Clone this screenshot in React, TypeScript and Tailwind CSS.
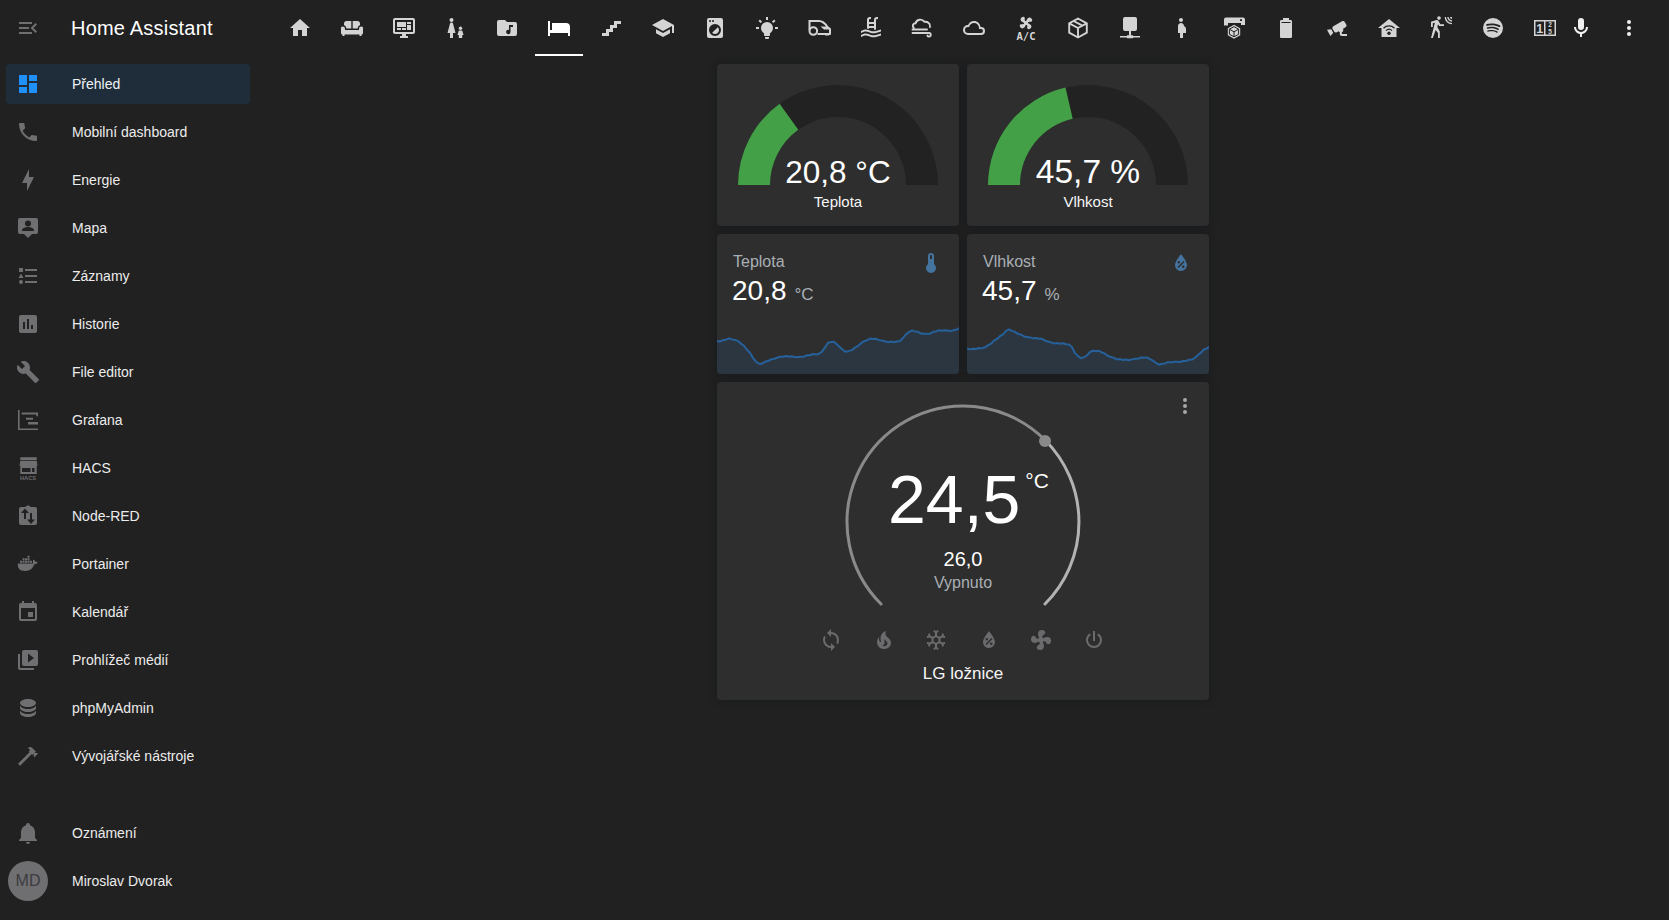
import React from "react";

const bg = "#212121";

function I({ d, className = "", children }: { d?: string; className?: string; children?: React.ReactNode }) {
  return (
    <svg viewBox="0 0 24 24" fill="currentColor" fillRule="evenodd" className={"w-6 h-6 shrink-0 block overflow-visible " + className}>
      {d ? <path d={d} /> : null}
      {children}
    </svg>
  );
}

const P = {
  menuOpen: "M21,15.61L19.59,17L14.58,12L19.59,7L21,8.39L17.44,12L21,15.61M3,6H16V8H3V6M3,13V11H13V13H3M3,18V16H16V18H3Z",
  dashboard: "M13,3V9H21V3M13,21H21V11H13M3,21H11V15H3M3,13H11V3H3V13Z",
  phone: "M6.62,10.79C8.06,13.62 10.38,15.94 13.21,17.38L15.41,15.18C15.69,14.9 16.08,14.82 16.43,14.93C17.55,15.3 18.75,15.5 20,15.5A1,1 0 0,1 21,16.5V20A1,1 0 0,1 20,21A17,17 0 0,1 3,4A1,1 0 0,1 4,3H7.5A1,1 0 0,1 8.5,4C8.5,5.25 8.7,6.45 9.07,7.57C9.18,7.92 9.1,8.31 8.82,8.59L6.62,10.79Z",
  bolt: "M11 15H6L13 1V9H18L11 23V15Z",
  map: "M4,2H20A2,2 0 0,1 22,4V16A2,2 0 0,1 20,18H16L12,22L8,18H4A2,2 0 0,1 2,16V4A2,2 0 0,1 4,2M12,4.5A3,3 0 0,0 9,7.5A3,3 0 0,0 12,10.5A3,3 0 0,0 15,7.5A3,3 0 0,0 12,4.5M6,15H18V14C18,12 14,10.9 12,10.9C10,10.9 6,12 6,14V15Z",
  list: "M5,9.5L7.5,14H2.5L5,9.5M3,4H7V8H3V4M5,20A2,2 0 0,0 7,18A2,2 0 0,0 5,16A2,2 0 0,0 3,18A2,2 0 0,0 5,20M9,5V7H21V5H9M9,19H21V17H9V19M9,13H21V11H9V13Z",
  chartBox: "M9 17H7V10H9V17M13 17H11V7H13V17M17 17H15V13H17V17M19 3H5C3.9 3 3 3.9 3 5V19C3 20.1 3.9 21 5 21H19C20.1 21 21 20.1 21 19V5C21 3.9 20.1 3 19 3Z",
  wrench: "M22.7,19L13.6,9.9C14.5,7.6 14,4.9 12.1,3C10.1,1 7.1,0.6 4.7,1.7L9,6L6,9L1.6,4.7C0.4,7.1 0.9,10.1 2.9,12.1C4.8,14 7.5,14.5 9.8,13.6L18.9,22.7C19.3,23.1 19.9,23.1 20.3,22.7L22.6,20.4C23.1,20 23.1,19.3 22.7,19Z",
  grafana: "M2,2H3.6V20.4H22V22H2V2M5.7,4.4H22V8.2H20.3V6.4H5.7V4.4M10,9.8H17V11.8H10V9.8M12,14H22V16.4H12V14Z",
  calendar: "M19,19H5V8H19M16,1V3H8V1H6V3H5C3.89,3 3,3.89 3,5V19A2,2 0 0,0 5,21H19A2,2 0 0,0 21,19V5C21,3.89 20.1,3 19,3H18V1M17,12H12V17H17V12Z",
  media: "M4,6H2V20A2,2 0 0,0 4,22H18V20H4V6M20,2H8A2,2 0 0,0 6,4V16A2,2 0 0,0 8,18H20A2,2 0 0,0 22,16V4A2,2 0 0,0 20,2M12,14.5V5.5L18,10L12,14.5Z",
  database: "M12,3C7.58,3 4,4.79 4,7C4,9.21 7.58,11 12,11C16.42,11 20,9.21 20,7C20,4.79 16.42,3 12,3M4,9V12C4,14.21 7.58,16 12,16C16.42,16 20,14.21 20,12V9C20,11.21 16.42,13 12,13C7.58,13 4,11.21 4,9M4,14V17C4,19.21 7.58,21 12,21C16.42,21 20,19.21 20,17V14C20,16.21 16.42,18 12,18C7.58,18 4,16.21 4,14Z",
  hammer: "M2 19.63L13.43 8.2L12.72 7.5L14.14 6.07L12 3.89C13.2 2.7 15.09 2.7 16.27 3.89L19.87 7.5L18.45 8.91H21.29L22 9.62L18.45 13.21L17.74 12.5V9.62L16.27 11.04L15.56 10.33L4.13 21.76L2 19.63Z",
  bell: "M21,19V20H3V19L5,17V11C5,7.9 7.03,5.17 10,4.29C10,4.19 10,4.1 10,4A2,2 0 0,1 12,2A2,2 0 0,1 14,4C14,4.1 14,4.19 14,4.29C16.97,5.17 19,7.9 19,11V17L21,19M14,21A2,2 0 0,1 12,23A2,2 0 0,1 10,21",
  docker: "M21.81 10.25C21.75 10.21 21.25 9.82 20.17 9.82C19.89 9.82 19.61 9.85 19.33 9.9C19.12 8.5 17.95 7.79 17.9 7.76L17.61 7.59L17.43 7.86C17.19 8.22 17 8.63 16.92 9.05C16.72 9.85 16.84 10.6 17.25 11.24C16.76 11.5 15.97 11.57 15.81 11.58H2.38C2.04 11.58 1.77 11.85 1.77 12.19C1.75 13.33 1.95 14.47 2.34 15.54C2.79 16.71 3.45 17.57 4.32 18.1C5.28 18.69 6.86 19 8.64 19C9.44 19 10.24 18.93 11.03 18.79C12.12 18.59 13.17 18.21 14.14 17.66C14.94 17.2 15.65 16.61 16.26 15.92C17.28 14.77 17.89 13.46 18.33 12.31H18.5C19.62 12.31 20.31 11.86 20.69 11.48C20.95 11.24 21.14 10.95 21.28 10.62L21.36 10.38L21.81 10.25ZM4 8.8H6V10.8H4ZM6.5 8.8H8.5V10.8H6.5ZM9 8.8H11V10.8H9ZM11.5 8.8H13.5V10.8H11.5ZM14 8.8H16V10.8H14ZM6.5 6.3H8.5V8.3H6.5ZM9 6.3H11V8.3H9ZM11.5 6.3H13.5V8.3H11.5ZM11.5 3.8H13.5V5.8H11.5Z",
  home: "M10,20V14H14V20H19V12H22L12,3L2,12H5V20H10Z",
  monitor: "M21,16V4H3V16H21M21,2A2,2 0 0,1 23,4V16A2,2 0 0,1 21,18H14V20H16V22H8V20H10V18H3C1.89,18 1,17.1 1,16V4C1,2.89 1.89,2 3,2H21M5,6H14V11H5V6M15,6H19V8H15V6M19,9V14H15V9H19M5,12H9V14H5V12M10,12H14V14H10V12Z",
  folderMusic: "M20 6H12L10 4H4A2 2 0 0 0 2 6V18A2 2 0 0 0 4 20H20A2 2 0 0 0 22 18V8A2 2 0 0 0 20 6M18 11H15.5V16A2.2 2.2 0 1 1 13.5 13.8C13.7 13.8 13.85 13.85 14 13.9V9H18Z",
  bed: "M19,7H5V14H3V5H1V20H3V17H21V20H23V11A4,4 0 0,0 19,7Z",
  stairs: "M15,5V9H11V13H7V17H3V20H10V16H14V12H18V8H22V5H15Z",
  school: "M12,3L1,9L12,15L21,10.09V17H23V9M5,13.18V17.18L12,21L19,17.18V13.18L12,17L5,13.18Z",
  washer: "M14.83,11.17C16.39,12.73 16.39,15.27 14.83,16.83C13.27,18.39 10.73,18.39 9.17,16.83L14.83,11.17M6,2H18A2,2 0 0,1 20,4V20A2,2 0 0,1 18,22H6A2,2 0 0,1 4,20V4A2,2 0 0,1 6,2M7,4A1,1 0 0,0 6,5A1,1 0 0,0 7,6A1,1 0 0,0 8,5A1,1 0 0,0 7,4M10,4A1,1 0 0,0 9,5A1,1 0 0,0 10,6A1,1 0 0,0 11,5A1,1 0 0,0 10,4M12,8A6,6 0 0,0 6,14A6,6 0 0,0 12,20A6,6 0 0,0 18,14A6,6 0 0,0 12,8Z",
  bulb: "M12,6A6,6 0 0,1 18,12C18,14.22 16.79,16.16 15,17.2V19A1,1 0 0,1 14,20H10A1,1 0 0,1 9,19V17.2C7.21,16.16 6,14.22 6,12A6,6 0 0,1 12,6M14,21V22A1,1 0 0,1 13,23H11A1,1 0 0,1 10,22V21H14M20,11H23V13H20V11M1,11H4V13H1V11M13,1V4H11V1H13M4.92,3.5L7.05,5.64L5.63,7.05L3.5,4.93L4.92,3.5M16.95,5.63L19.07,3.5L20.5,4.93L18.37,7.05L16.95,5.63Z",
  pool: "M2,15C3.67,14.25 5.33,13.5 7,13.58C8.67,13.67 10.33,14.58 12,15C13.67,15.42 15.33,15.33 17,15C18.67,14.67 20.33,14.08 22,13.5V15.5C20.33,16.08 18.67,16.67 17,17C15.33,17.33 13.67,17.42 12,17C10.33,16.58 8.67,15.67 7,15.58C5.33,15.5 3.67,16.25 2,17V15M2,19C3.67,18.25 5.33,17.5 7,17.58C8.67,17.67 10.33,18.58 12,19C13.67,19.42 15.33,19.33 17,19C18.67,18.67 20.33,18.08 22,17.5V19.5C20.33,20.08 18.67,20.67 17,21C15.33,21.33 13.67,21.42 12,21C10.33,20.58 8.67,19.67 7,19.58C5.33,19.5 3.67,20.25 2,21V19M8,12.5V4A3,3 0 0,1 11,1H12V3H11A1,1 0 0,0 10,4V6H15V4A3,3 0 0,1 18,1H19V3H18A1,1 0 0,0 17,4V13.5L15,13.8V12H10V13L8,12.5M10,8V10H15V8H10Z",
  cloud: "M6,19A5,5 0 0,1 1,14A5,5 0 0,1 6,9C7,6.65 9.3,5 12,5C15.43,5 18.24,7.66 18.5,11.03L19,11A4,4 0 0,1 23,15A4,4 0 0,1 19,19H6M19,13H17V12A5,5 0 0,0 12,7C9.5,7 7.45,8.82 7.06,11.19C6.73,11.07 6.37,11 6,11A3,3 0 0,0 3,14A3,3 0 0,0 6,17H19A2,2 0 0,0 21,15A2,2 0 0,0 19,13Z",
  fan: "M12.5,2C17,2 17.11,5.57 14.75,6.75C13.76,7.24 13.32,8.29 13.13,9.22C13.61,9.42 14.03,9.73 14.35,10.13C18.05,8.13 22.03,8.92 22.03,12.5C22.03,17 18.46,17.1 17.28,14.73C16.78,13.74 15.72,13.3 14.79,13.11C14.59,13.59 14.28,14 13.88,14.34C15.87,18.03 15.08,22 11.5,22C7,22 6.91,18.42 9.27,17.24C10.25,16.75 10.69,15.71 10.89,14.79C10.4,14.59 9.97,14.27 9.65,13.87C5.96,15.85 2,15.07 2,11.5C2,7 5.56,6.89 6.74,9.26C7.24,10.25 8.29,10.68 9.22,10.87C9.41,10.39 9.73,9.97 10.14,9.65C8.15,5.96 8.94,2 12.5,2Z",
  pregnant: "M9,4C9,2.89 9.89,2 11,2C12.11,2 13,2.89 13,4C13,5.11 12.11,6 11,6C9.89,6 9,5.11 9,4M16,13C16,11.66 15.17,10.5 14,10C14,8.34 12.66,7 11,7C9.34,7 8,8.34 8,10V17H10V22H13V17H16V13Z",
  battery: "M16.67,4H15V2H9V4H7.33A1.33,1.33 0 0,0 6,5.33V20.67C6,21.4 6.6,22 7.33,22H16.67A1.33,1.33 0 0,0 18,20.67V5.33C18,4.6 17.4,4 16.67,4ZM7.5,6H16.5V7H7.5Z",
  cctv: "M18.15,4.94C17.77,4.91 17.37,5 17,5.2L8.35,10.2C7.39,10.76 7.07,12 7.62,12.94L9.12,15.53C9.67,16.5 10.89,16.82 11.85,16.27L13.65,15.23C13.92,15.69 14.32,16.06 14.81,16.27V18.04C14.81,19.13 15.7,20 16.81,20H22V18.04H16.81V16.27C17.72,15.87 18.31,14.97 18.31,14C18.31,13.54 18.19,13.11 17.97,12.73L20.5,11.27C21.47,10.71 21.8,9.5 21.24,8.53L19.74,5.94C19.4,5.34 18.79,5 18.15,4.94M6.22,13.17L2,13.87L2.75,15.17L4.75,18.63L5.5,19.93L8.22,16.63L6.22,13.17Z",
  motion: "M10,0.2C9,0.2 8.2,1 8.2,2C8.2,3 9,3.8 10,3.8C11,3.8 11.8,3 11.8,2C11.8,1 11,0.2 10,0.2M15.67,1A7.33,7.33 0 0,0 23,8.33V7A6,6 0 0,1 17,1H15.67M18.33,1C18.33,3.58 20.42,5.67 23,5.67V4.33C21.16,4.33 19.67,2.84 19.67,1H18.33M21,1A2,2 0 0,0 23,3V1H21M7.92,4.03C7.75,4.03 7.58,4.06 7.42,4.11L2,5.8V11H3.8V7.33L5.91,6.67L2,22H3.8L6.67,13.89L9,17V22H10.8V15.59L8.31,11.05L9.04,8.18L10.12,10H15V8.2H11.38L9.38,4.87C9.08,4.37 8.54,4.03 7.92,4.03Z",
  spotify: "M17.9,10.9C14.7,9 9.35,8.8 6.3,9.75C5.8,9.9 5.3,9.6 5.15,9.15C5,8.65 5.3,8.15 5.75,8C9.3,6.95 15.15,7.15 18.85,9.35C19.3,9.6 19.45,10.2 19.2,10.65C18.95,11 18.35,11.15 17.9,10.9M17.8,13.7C17.55,14.05 17.1,14.2 16.75,13.95C14.05,12.3 9.95,11.8 6.8,12.8C6.4,12.9 5.95,12.7 5.85,12.3C5.75,11.9 5.95,11.45 6.35,11.35C10,10.25 14.5,10.8 17.6,12.7C17.9,12.85 18.05,13.35 17.8,13.7M16.6,16.45C16.4,16.75 16.05,16.85 15.75,16.65C13.4,15.2 10.45,14.9 6.95,15.7C6.6,15.8 6.3,15.55 6.2,15.25C6.1,14.9 6.35,14.6 6.65,14.5C10.45,13.65 13.75,14 16.35,15.6C16.7,15.75 16.75,16.15 16.6,16.45M12,2A10,10 0 0,0 2,12A10,10 0 0,0 12,22A10,10 0 0,0 22,12A10,10 0 0,0 12,2Z",
  mic: "M12,2A3,3 0 0,1 15,5V11A3,3 0 0,1 12,14A3,3 0 0,1 9,11V5A3,3 0 0,1 12,2M19,11C19,14.53 16.39,17.44 13,17.93V21H11V17.93C7.61,17.44 5,14.53 5,11H7A5,5 0 0,0 12,16A5,5 0 0,0 17,11H19Z",
  dots: "M12,16A2,2 0 0,1 14,18A2,2 0 0,1 12,20A2,2 0 0,1 10,18A2,2 0 0,1 12,16M12,10A2,2 0 0,1 14,12A2,2 0 0,1 12,14A2,2 0 0,1 10,12A2,2 0 0,1 12,10M12,4A2,2 0 0,1 14,6A2,2 0 0,1 12,8A2,2 0 0,1 10,6A2,2 0 0,1 12,4Z",
  thermo: "M15 13V5A3 3 0 0 0 9 5V13A5 5 0 1 0 15 13M12 4A1 1 0 0 1 13 5V8H11V5A1 1 0 0 1 12 4Z",
  waterPct: "M12,3.25C12,3.25 6,10 6,14C6,17.32 8.69,20 12,20A6,6 0 0,0 18,14C18,10 12,3.25 12,3.25M14.47,9.97L15.53,11.03L9.53,17.03L8.47,15.97M9.75,10A1.25,1.25 0 0,1 11,11.25A1.25,1.25 0 0,1 9.75,12.5A1.25,1.25 0 0,1 8.5,11.25A1.25,1.25 0 0,1 9.75,10M14.25,14.5A1.25,1.25 0 0,1 15.5,15.75A1.25,1.25 0 0,1 14.25,17A1.25,1.25 0 0,1 13,15.75A1.25,1.25 0 0,1 14.25,14.5Z",
  sync: "M12,18A6,6 0 0,1 6,12C6,11 6.25,10.03 6.7,9.2L5.24,7.74C4.46,8.97 4,10.43 4,12A8,8 0 0,0 12,20V23L16,19L12,15M12,4V1L8,5L12,9V6A6,6 0 0,1 18,12C18,13 17.75,13.97 17.3,14.8L18.76,16.26C19.54,15.03 20,13.57 20,12A8,8 0 0,0 12,4Z",
  fire: "M17.66 11.2C17.43 10.9 17.15 10.64 16.89 10.38C16.22 9.78 15.46 9.35 14.82 8.72C13.33 7.26 13 4.85 13.95 3C13 3.23 12.17 3.75 11.46 4.32C8.87 6.4 7.85 10.07 9.07 13.22C9.11 13.32 9.15 13.42 9.15 13.55C9.15 13.77 9 13.97 8.8 14.05C8.57 14.15 8.33 14.09 8.14 13.93C8.08 13.88 8.04 13.83 8 13.76C6.87 12.33 6.69 10.28 7.45 8.64C5.78 10 4.87 12.3 5 14.47C5.06 14.97 5.12 15.47 5.29 15.97C5.43 16.57 5.7 17.17 6 17.7C7.08 19.43 8.95 20.67 10.96 20.92C13.1 21.19 15.39 20.8 17.03 19.32C18.86 17.66 19.5 15 18.56 12.72L18.43 12.46C18.22 12 17.66 11.2 17.66 11.2M14.5 17.5C14.22 17.74 13.76 18 13.4 18.1C12.28 18.5 11.16 17.94 10.5 17.28C11.69 17 12.4 16.12 12.61 15.23C12.78 14.43 12.46 13.77 12.33 13C12.21 12.26 12.23 11.63 12.5 10.94C12.69 11.32 12.89 11.7 13.13 12C13.9 13 15.11 13.44 15.37 14.8C15.41 14.94 15.43 15.08 15.43 15.23C15.46 16.05 15.1 16.95 14.5 17.5H14.5Z",
  snow: "M20.79,13.95L18.46,14.57L16.46,13.44V10.56L18.46,9.43L20.79,10.05L21.31,8.12L19.54,7.65L20,5.88L18.07,5.36L17.45,7.69L15.45,8.82L13,7.38V5.12L14.71,3.41L13.29,2L12,3.29L10.71,2L9.29,3.41L11,5.12V7.38L8.5,8.82L6.5,7.69L5.92,5.36L4,5.88L4.47,7.65L2.7,8.12L3.22,10.05L5.55,9.43L7.55,10.56V13.45L5.55,14.58L3.22,13.96L2.7,15.89L4.47,16.36L4,18.12L5.93,18.64L6.55,16.31L8.55,15.18L11,16.62V18.88L9.29,20.59L10.71,22L12,20.71L13.29,22L14.7,20.59L13,18.88V16.62L15.5,15.17L17.5,16.3L18.12,18.63L20,18.12L19.53,16.35L21.3,15.88L20.79,13.95M9.5,10.56L12,9.11L14.5,10.56V13.44L12,14.89L9.5,13.44V10.56Z",
  power: "M16.56,5.44L15.11,6.89C16.84,7.94 18,9.83 18,12A6,6 0 0,1 12,18A6,6 0 0,1 6,12C6,9.83 7.16,7.94 8.88,6.88L7.44,5.44C5.36,6.88 4,9.28 4,12A8,8 0 0,0 12,20A8,8 0 0,0 20,12C20,9.28 18.64,6.88 16.56,5.44M13,3H11V13H13",
};

const HacsIcon = () => (
  <I>
    <path d="M4.3,1.3H20.7V4H4.3ZM4.3,4.7H20.7L21.5,9.7H3.5Z M4.3,9.7H20.7V18H4.3ZM6,12V16H14.5V12ZM16,12V16H18.5V12Z" />
    <text x="12" y="23.5" textAnchor="middle" fontSize="6" fontWeight="700" fontFamily="Liberation Sans" fill="currentColor" textLength="16" lengthAdjust="spacingAndGlyphs">HACS</text>
  </I>
);

const NodeRedIcon = () => (
  <I>
    <path d="M5,3H9.5C9.8,2 10.8,1.4 12,1.4C13.2,1.4 14.2,2 14.5,3H19A2,2 0 0,1 21,5V19A2,2 0 0,1 19,21H5A2,2 0 0,1 3,19V5A2,2 0 0,1 5,3Z M9,4.5L5,9H8V15H10V9H13Z M14,9V15.5H11L15,20L19,15.5H16V9Z" />
  </I>
);

const SofaIcon = () => (
  <I>
    <path d="M6.5,5H11.3V12.5H6.2V12C6.2,10.5 5,9.5 4,9.2V7.5C4,6 5.1,5 6.5,5ZM12.7,5H17.5C18.9,5 20,6 20,7.5V9.2C19,9.5 17.8,10.5 17.8,12V12.5H12.7Z" />
    <path d="M2.5,10.5C3.8,10.5 5,11.3 5,12.8V14H19V12.8C19,11.3 20.2,10.5 21.5,10.5C22.6,10.5 23.5,11.5 23,12.8V17C23,18 22,18.5 21.5,18.5V20H19.5V18.5H4.5V20H2.5V18.5C2,18.5 1,18 1,17V12.8C0.5,11.5 1.4,10.5 2.5,10.5Z" />
  </I>
);

const FamilyIcon = () => (
  <I>
    <circle cx="7.5" cy="4" r="2" />
    <path d="M7.5,6.5C8.3,6.5 8.8,7 9,7.6L11.5,17H9V22H6V17H3.5L6,7.6C6.2,7 6.7,6.5 7.5,6.5Z" />
    <circle cx="16.5" cy="12.3" r="1.7" />
    <path d="M14.8,14.6H18.2L19.6,19H18.2V22H14.8V19H13.4Z" />
  </I>
);

const MowerIcon = () => (
  <I>
    <path fill="none" stroke="currentColor" strokeWidth="2" strokeLinejoin="round" d="M1.5,5H12C15.5,5 18.5,8 20.5,11L23,13V18H10.5 M2.5,14V5" />
    <circle cx="6.3" cy="15" r="3.8" fill="none" stroke="currentColor" strokeWidth="2" />
    <path d="M13.5,10.5H19.5L23,13.5H17Z M18,18.5H22V19.5H18Z" />
  </I>
);

const WindCloudIcon = () => (
  <I>
    <path fill="none" stroke="currentColor" strokeWidth="1.9" strokeLinecap="round" d="M3.8,11.8C1.8,10 3,7.2 5.6,7.2C6.6,3.2 12,2.4 14.4,5.8C17.5,5.4 20.8,7.5 20,11 M2.5,13.5H17 M2.5,17H19C21.3,17 21.3,20.6 19,20.6C18.2,20.6 17.6,20.2 17.4,19.6" />
  </I>
);

const AcIcon = () => (
  <I>
    <g transform="translate(3.6,-1.4) scale(0.7) rotate(45 12 12)">
      <path d={P.fan} />
    </g>
    <text x="12" y="23.8" textAnchor="middle" fontSize="11" fontWeight="700" fontFamily="DejaVu Sans Mono" fill="currentColor" textLength="19" lengthAdjust="spacingAndGlyphs">A/C</text>
  </I>
);

const BoxIcon = () => (
  <I>
    <path fill="none" stroke="currentColor" strokeWidth="1.9" strokeLinejoin="round" d="M12,2.5L20.8,7.3V16.7L12,21.5L3.2,16.7V7.3Z M3.2,7.3L12,12L20.8,7.3 M12,12V21.5 M7.6,5L16.4,9.7" />
  </I>
);

const ServerIcon = () => (
  <I>
    <path d="M7,1H17A2,2 0 0,1 19,3V13A2,2 0 0,1 17,15H13V19.2H14.6C14.9,19.2 15.2,19.5 15.3,20H22V21.5H15.3C15.2,22 14.9,22.2 14.6,22.2H9.4C9.1,22.2 8.8,22 8.7,21.5H2V20H8.7C8.8,19.5 9.1,19.2 9.4,19.2H11V15H7A2,2 0 0,1 5,13V3A2,2 0 0,1 7,1Z" />
  </I>
);

const PrinterIcon = () => (
  <I>
    <path d="M4,1.5H21A2,2 0 0,1 23,3.5V9H19V7H6V9.5H2V3.5A2,2 0 0,1 4,1.5ZM18,3.2H20V5H18Z" />
    <path d="M12,8.8L18.2,12.2V19.2L12,22.7L5.8,19.2V12.2Z" />
    <path fill="none" stroke={bg} strokeWidth="1" d="M7.4,13.2L12,15.8L16.6,13.2 M12,15.8V20.8 M7.4,13.2V18.3L12,20.8L16.6,18.3V13.2L12,10.6Z" />
  </I>
);

const HomeWifiIcon = () => (
  <I>
    <path d="M12,3L1,12H4.5V21H19.5V12H23Z" />
    <path fill="none" stroke={bg} strokeWidth="1.3" d="M6.5,12.2C9.5,9.2 14.5,9.2 17.5,12.2 M9,14.6C10.7,13 13.3,13 15,14.6" />
    <circle cx="12" cy="17.2" r="1.7" fill={bg} />
  </I>
);

const CounterIcon = () => (
  <I>
    <path d="M1,4H23V20H1ZM2.5,5.5V18.5H11V5.5ZM12.5,5.5V18.5H21.5V5.5Z" />
    <text x="6.8" y="16.8" textAnchor="middle" fontSize="12.5" fontWeight="700" fontFamily="Liberation Sans" fill="currentColor">1</text>
    <text x="17" y="11" textAnchor="middle" fontSize="6.5" fontWeight="700" fontFamily="Liberation Sans" fill="currentColor">2</text>
    <text x="17" y="17.8" textAnchor="middle" fontSize="6.5" fontWeight="700" fontFamily="Liberation Sans" fill="currentColor">5</text>
  </I>
);

const nav: [string, React.ReactNode][] = [
  ["Přehled", <I d={P.dashboard} />],
  ["Mobilní dashboard", <I d={P.phone} />],
  ["Energie", <I d={P.bolt} />],
  ["Mapa", <I d={P.map} />],
  ["Záznamy", <I d={P.list} />],
  ["Historie", <I d={P.chartBox} />],
  ["File editor", <I d={P.wrench} />],
  ["Grafana", <I d={P.grafana} />],
  ["HACS", <HacsIcon />],
  ["Node-RED", <NodeRedIcon />],
  ["Portainer", <I d={P.docker} />],
  ["Kalendář", <I d={P.calendar} />],
  ["Prohlížeč médií", <I d={P.media} />],
  ["phpMyAdmin", <I d={P.database} />],
  ["Vývojářské nástroje", <I d={P.hammer} />],
];

const tabs: React.ReactNode[] = [
  <I d={P.home} />,
  <SofaIcon />,
  <I d={P.monitor} />,
  <FamilyIcon />,
  <I d={P.folderMusic} />,
  <I d={P.bed} />,
  <I d={P.stairs} />,
  <I d={P.school} />,
  <I d={P.washer} />,
  <I d={P.bulb} />,
  <MowerIcon />,
  <I d={P.pool} />,
  <WindCloudIcon />,
  <I d={P.cloud} />,
  <AcIcon />,
  <BoxIcon />,
  <ServerIcon />,
  <I d={P.pregnant} />,
  <PrinterIcon />,
  <I d={P.battery} />,
  <I d={P.cctv} />,
  <HomeWifiIcon />,
  <I d={P.motion} />,
  <I d={P.spotify} />,
  <CounterIcon />,
];

function NavRow({ label, icon, active }: { label: string; icon: React.ReactNode; active?: boolean }) {
  return (
    <div className={"h-10 ml-[6px] mr-[7px] pl-[10px] flex items-center gap-8 rounded " + (active ? "bg-[#1f2d3b]" : "")}>
      <span className={active ? "text-[#2090f8]" : "text-[#6f6f72]"}>{icon}</span>
      <span className={"text-sm " + (active ? "text-[#eef2f6]" : "text-[#ececec]")}>{label}</span>
    </div>
  );
}

function Gauge({ green, value, size, label }: { green: string; value: string; size: number; label: string }) {
  return (
    <div className="h-[162px] bg-[#2e2e2e] rounded pt-[21px] flex flex-col items-center shadow-[0_0_8px_rgba(0,15,25,0.35)]">
      <svg viewBox="0 0 200 100" className="w-[200px] h-[100px] block overflow-visible">
        <path d="M0,100 A100,100 0 0 1 200,100 H168 A68,68 0 0 0 32,100 Z" fill="#222222" />
        <path d={green} fill="#43a047" />
        <text x="100" y="98" textAnchor="middle" fontSize={size} fontFamily="Liberation Sans" fill="#ffffff">
          {value}
        </text>
      </svg>
      <div className="mt-[7px] text-[15px] leading-5 text-[#f6f6f6]">{label}</div>
    </div>
  );
}

// Resample the traced line every 3px, soften it and add the small steps of real sensor data.
function trace(raw: [number, number][]): string {
  const xs: number[] = [];
  const ys: number[] = [];
  const start = raw[0][0];
  const end = raw[raw.length - 1][0];
  let j = 0;
  for (let x = start; x <= end; x += 9) {
    while (j < raw.length - 2 && raw[j + 1][0] < x) j++;
    const [x0, y0] = raw[j];
    const [x1, y1] = raw[j + 1];
    xs.push(x);
    ys.push(y0 + ((y1 - y0) * (x - x0)) / (x1 - x0));
  }
  xs.push(end);
  ys.push(raw[raw.length - 1][1]);
  return xs
    .map((x, i) => {
      const a = ys[Math.max(i - 1, 0)];
      const b = ys[i];
      const c = ys[Math.min(i + 1, ys.length - 1)];
      const wiggle = [0, 1.5, -1, 0.5, -1.5, 1, 0][i % 7];
      return `${x},${((a + 2 * b + c) / 4 + wiggle).toFixed(1)}`;
    })
    .join(" ");
}

function Sensor({ name, value, unit, icon, raw, box }: { name: string; value: string; unit: string; icon: string; raw: [number, number][]; box: string }) {
  const points = trace(raw);
  const first = raw[0][0];
  const last = raw[raw.length - 1][0];
  return (
    <div className="h-[140px] bg-[#2e2e2e] rounded overflow-hidden flex flex-col shadow-[0_0_8px_rgba(0,15,25,0.35)]">
      <div className="flex justify-between pl-4 pr-4 pt-4">
        <div>
          <div className="text-base leading-6 text-[#a9b0b5]">{name}</div>
          <div className="mt-px -ml-px flex items-baseline gap-2">
            <span className="text-[28px] leading-8 text-white">{value}</span>
            <span className="text-[17px] leading-6 text-[#a9b0b5]">{unit}</span>
          </div>
        </div>
        <I d={icon} className="mt-px text-[#44739e]" />
      </div>
      <svg viewBox={box} preserveAspectRatio="none" className="mt-auto w-[242px] h-[50px] block">
        <polygon points={`${first},437 ${points} ${last},437`} fill="#2b3640" />
        <polyline points={points} fill="none" stroke="#26619c" strokeWidth="6" strokeLinejoin="round" />
      </svg>
    </div>
  );
}

const tempPts: [number, number][] = [[21, 338], [35, 339], [55, 330], [80, 335], [95, 345], [125, 380], [142, 410], [160, 403], [200, 388], [220, 383], [265, 387], [300, 380], [325, 376], [335, 378], [348, 345], [365, 338], [380, 345], [400, 368], [415, 371], [435, 360], [455, 342], [480, 330], [510, 335], [530, 340], [565, 342], [575, 335], [595, 308], [605, 306], [640, 317], [660, 316], [670, 310], [700, 305], [730, 308], [747, 300]];
const humPts: [number, number][] = [[771, 360], [785, 363], [825, 358], [860, 332], [880, 318], [893, 298], [920, 315], [945, 325], [1000, 333], [1015, 341], [1040, 345], [1085, 348], [1095, 378], [1115, 392], [1125, 390], [1140, 368], [1165, 366], [1195, 383], [1220, 392], [1250, 396], [1300, 387], [1320, 390], [1345, 410], [1380, 401], [1425, 399], [1455, 390], [1475, 368], [1497, 356]];

export default function App() {
  return (
    <div className="flex h-screen overflow-hidden bg-[#212121] [font-family:'Liberation_Sans',Arial,sans-serif]">
      <aside className="w-[257px] shrink-0 flex flex-col pb-[19px]">
        <div className="h-14 flex items-center pl-4 gap-8 shrink-0">
          <I d={P.menuOpen} className="text-[#6f6f72]" />
          <span className="text-[20px] tracking-[0.2px] -ml-px text-white">Home Assistant</span>
        </div>
        <nav className="pt-2 flex flex-col gap-2">
          {nav.map(([label, icon], i) => (
            <NavRow key={label} label={label} icon={icon} active={i === 0} />
          ))}
        </nav>
        <div className="mt-auto flex flex-col gap-2">
          <NavRow label="Oznámení" icon={<I d={P.bell} />} />
          <div className="h-10 ml-[6px] pl-[2px] flex items-center gap-[24px]">
            <div className="w-10 h-10 rounded-full bg-[#6f6f72] flex items-center justify-center text-base text-[#3c3c3e]">MD</div>
            <span className="text-sm text-[#ececec]">Miroslav Dvorak</span>
          </div>
        </div>
      </aside>
      <main className="flex-1 min-w-0 flex flex-col">
        <header className="h-14 shrink-0 flex items-center pl-[17px]">
          {tabs.map((t, i) => (
            <div key={i} className={"relative w-[51.875px] h-14 flex items-center justify-center shrink-0 " + (i === 5 ? "text-white" : "text-[#d4d4d4]")}>
              {t}
              {i === 5 ? <span className="absolute bottom-0 left-[2px] w-12 h-[2px] bg-white" /> : null}
            </div>
          ))}
          <div className="w-5 flex justify-center text-[#f0f0f0]">
            <I d={P.mic} />
          </div>
          <div className="ml-[26px] text-[#f0f0f0]">
            <I d={P.dots} />
          </div>
        </header>
        <div className="pt-2 flex justify-center">
          <div className="w-[492px] flex flex-col gap-2">
            <div className="grid grid-cols-2 gap-2">
              <Gauge green="M0,100 A100,100 0 0 1 41.6,18.8 L60.3,44.8 A68,68 0 0 0 32,100 Z" value="20,8 °C" size={31.5} label="Teplota" />
              <Gauge green="M0,100 A100,100 0 0 1 77.5,2.6 L84.7,33.7 A68,68 0 0 0 32,100 Z" value="45,7 %" size={33.5} label="Vlhkost" />
            </div>
            <div className="grid grid-cols-2 gap-2">
              <Sensor name="Teplota" value="20,8" unit="°C" icon={P.thermo} raw={tempPts} box="21 287 726 150" />
              <Sensor name="Vlhkost" value="45,7" unit="%" icon={P.waterPct} raw={humPts} box="771 287 726 150" />
            </div>
            <div className="relative h-[318px] bg-[#2e2e2e] rounded pt-5 shadow-[0_0_8px_rgba(0,15,25,0.35)]">
              <div className="absolute top-3 right-3 text-[#a8a8a8]">
                <I d={P.dots} />
              </div>
              <div className="relative w-[240px] h-[216px] mx-auto">
                <svg viewBox="0 0 240 216" className="w-[240px] h-[216px] block">
                  <path d="M38,202 A116,116 0 0 1 120,4 A116,116 0 0 1 202,38" fill="none" stroke="#8a8a8a" strokeWidth="3" strokeLinecap="round" />
                  <path d="M202,38 A116,116 0 0 1 202,202" fill="none" stroke="#b2b2b2" strokeWidth="3" strokeLinecap="round" />
                  <circle cx="202" cy="39" r="6" fill="#8a8a8a" />
                </svg>
                <div className="absolute inset-0 pt-16 flex flex-col items-center">
                  <div className="self-start pl-[45px] flex items-start">
                    <span className="text-[68px] leading-[67px] text-white">24,5</span>
                    <span className="mt-[3px] ml-[5px] text-[21px] leading-6 text-white">°C</span>
                  </div>
                  <div className="mt-[14px] text-[20px] leading-6 text-white">26,0</div>
                  <div className="mt-[2px] text-base leading-5 text-[#a9b0b5]">Vypnuto</div>
                </div>
              </div>
              <div className="mt-[10px] pr-px flex justify-center gap-[28.6px] text-[#6b6b6e]">
                <I d={P.sync} />
                <I d={P.fire} />
                <I d={P.snow} />
                <I d={P.waterPct} />
                <I d={P.fan} />
                <I d={P.power} />
              </div>
              <div className="mt-[10px] text-center text-[17px] leading-6 text-[#f6f6f6]">LG ložnice</div>
            </div>
          </div>
        </div>
      </main>
    </div>
  );
}
